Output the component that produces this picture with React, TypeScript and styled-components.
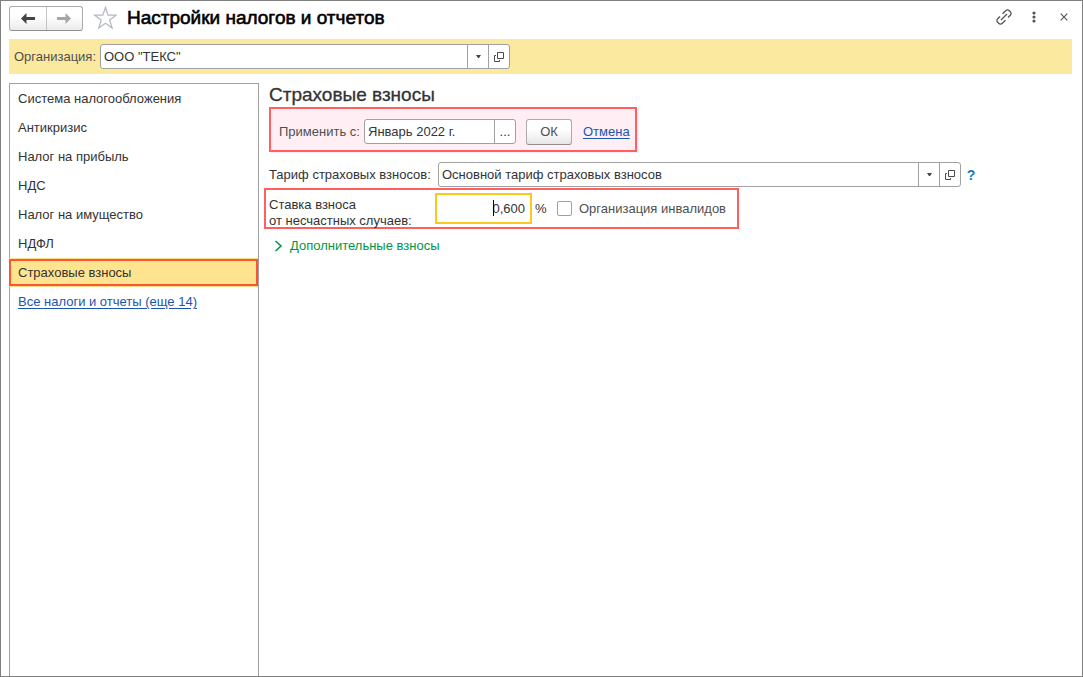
import React, { useState } from 'react';
import styled, { createGlobalStyle, css } from 'styled-components';

const GlobalStyle = createGlobalStyle`
  *, *::before, *::after { box-sizing: border-box; }
  body { margin: 0; background: #fff; }
  body, button, input {
    font-family: "Liberation Sans", Arial, sans-serif;
    font-size: 13px;
    line-height: 16px;
    color: #333;
  }
`;

const Window = styled.div`
  display: flex;
  flex-direction: column;
  min-height: 100vh;
  padding: 4px 10px 0 8px;
  border: 1px solid #808080;
`;

const TitleBar = styled.header`
  display: flex;
  align-items: center;
  height: 26px;
`;

const NavGroup = styled.div`
  display: flex;
  width: 74px;
  height: 25px;
  border: 1px solid #ababab;
  border-bottom-color: #8f8f8f;
  border-radius: 3px;
  background: linear-gradient(#fff 40%, #ebebeb);
`;

const NavButton = styled.button`
  display: flex;
  flex: 1;
  align-items: center;
  justify-content: center;
  padding: 0;
  border: 0;
  background: none;
  & + & { border-left: 1px solid #c4c4c4; }
`;

const IconButton = styled.button`
  display: flex;
  align-items: center;
  justify-content: center;
  width: 24px;
  height: 24px;
  padding: 0;
  border: 0;
  background: none;
`;

const StarButton = styled(IconButton)`
  margin: 0 10px;
`;

const Title = styled.h1`
  flex: 1;
  margin: 0;
  font-size: 19px;
  line-height: 24px;
  font-weight: 400;
  color: #000;
  -webkit-text-stroke: 0.6px #000;
`;

const WindowTools = styled.div`
  display: flex;
  align-self: flex-start;
  gap: 6px;
  margin-right: -4px;
`;

const OrgBar = styled.div`
  display: flex;
  align-items: center;
  height: 35px;
  margin-top: 8px;
  padding: 0 5px;
  background: #fce9a0;
`;

const Label = styled.label<{ $muted?: boolean }>`
  color: ${p => (p.$muted ? '#4f4f4f' : '#333')};
  white-space: nowrap;
`;

const OrgLabel = styled(Label)`
  width: 86px;
`;

const Field = styled.div<{ $width: number }>`
  display: flex;
  flex: 0 1 ${p => p.$width}px;
  height: 25px;
  border: 1px solid #a0a0a0;
  border-radius: 3px;
  background: #fff;
  overflow: hidden;
`;

const FieldInput = styled.input`
  flex: 1;
  min-width: 0;
  padding: 0 3px;
  border: 0;
  outline: 0;
  background: none;
`;

const FieldButton = styled.button`
  display: flex;
  align-items: center;
  justify-content: center;
  width: 21px;
  padding: 0;
  border: 0;
  border-left: 1px solid #a0a0a0;
  background: none;
`;

const Body = styled.div`
  display: flex;
  flex: 1;
  margin-top: 9px;
`;

const Sidebar = styled.nav`
  display: flex;
  flex-direction: column;
  flex: 0 0 250px;
  border: 1px solid #a0a0a0;
  border-bottom: 0;
`;

const selectedItem = css`
  border: 2px solid #ff5430;
  background: #ffe48f;
  box-shadow: 0 -1px #fce08a, 0 1px #fce08a;
`;

const SidebarItem = styled.button<{ $selected?: boolean }>`
  height: 27px;
  margin: 1px 0 1px -1px;
  padding: 0 7px;
  border: 2px solid transparent;
  background: none;
  text-align: left;
  ${p => p.$selected && selectedItem}
`;

const Link = styled.a`
  color: #1a56ae;
  text-decoration: underline;
  text-underline-offset: 2px;
`;

const SidebarLink = styled(Link)`
  padding: 7px 8px;
  line-height: 15px;
`;

const Content = styled.main`
  flex: 1;
  min-width: 0;
  padding-left: 5px;
`;

const Heading = styled.h2`
  margin: 0 5px;
  font-size: 19px;
  line-height: 24px;
  font-weight: 400;
  color: #333;
  -webkit-text-stroke: 0.3px #333;
`;

const ApplyPanel = styled.form`
  display: flex;
  align-items: center;
  width: 368px;
  height: 45px;
  margin-left: 5px;
  padding: 4px 0 0 8px;
  border: 2px solid #ff5f5f;
  background: #ffeff4;
  box-shadow: 2px 1px #ffeff4;
`;

const ApplyLabel = styled(Label)`
  width: 85px;
`;

const OkButton = styled.button`
  width: 46px;
  height: 26px;
  margin: 0 11px 0 10px;
  padding: 0;
  border: 1px solid #ababab;
  border-bottom-color: #8f8f8f;
  border-radius: 3px;
  background: linear-gradient(#fff 40%, #e6e6e6);
  color: #4f4f4f;
`;

const TariffRow = styled.div`
  display: flex;
  align-items: center;
  margin: 10px 0 0 5px;
`;

const TariffLabel = styled(Label)`
  width: 169px;
`;

const HelpButton = styled.button`
  width: 20px;
  padding: 0;
  border: 0;
  background: none;
  color: #0f7ac4;
  font-size: 14px;
  font-weight: 700;
`;

const RatePanel = styled.div`
  display: flex;
  align-items: center;
  width: 475px;
  height: 41px;
  margin-top: 1px;
  padding-left: 3px;
  border: 2px solid #ff5f5f;
`;

const RateLabel = styled(Label)`
  width: 166px;
  padding-top: 8px;
`;

const RateField = styled.div`
  position: relative;
  width: 97px;
  height: 31px;
`;

const RateInput = styled.input`
  width: 100%;
  height: 100%;
  padding: 0 5px;
  border: 2px solid #f9c920;
  outline: 0;
  text-align: right;
  caret-color: transparent;
`;

const Caret = styled.span`
  position: absolute;
  top: 7px;
  right: 38px;
  width: 1px;
  height: 16px;
  background: #000;
`;

const Percent = styled.span`
  width: 25px;
  padding-left: 3px;
`;

const CheckLabel = styled(Label)`
  display: flex;
  align-items: center;
  gap: 7px;
`;

const Checkbox = styled.input`
  appearance: none;
  width: 15px;
  height: 15px;
  margin: 0;
  border: 1px solid #a0a0a0;
  border-radius: 2px;
  background: #fff;
  &:checked { background: #f9c920; }
`;

const Expander = styled.button`
  display: flex;
  align-items: center;
  gap: 7px;
  margin: 9px 0 0 10px;
  padding: 0;
  border: 0;
  background: none;
  color: #009646;
`;

const Arrow = ({ forward }: { forward?: boolean }) => (
  <svg width="14" height="11" viewBox="0 0 14 11" fill={forward ? '#a6a6a6' : '#444'} aria-hidden="true">
    <path d={forward ? 'M14 5.5 8.500 0v4H0v3h8.500v4z' : 'M0 5.5 5.500 0v4H14v3H5.500v4z'} />
  </svg>
);

const DropIcon = () => (
  <svg width="5" height="3" viewBox="0 0 5 3" aria-hidden="true">
    <path d="M0 0h5L3 3H2z" fill="#444" />
  </svg>
);

const OpenIcon = () => (
  <svg width="10" height="10" viewBox="0 0 10 10" fill="none" stroke="#4a4a4a" aria-hidden="true">
    <path d="M3.5.5h6v6h-6zM2 3.5H.5v6h5V8" />
  </svg>
);

const LookupButtons = () => (
  <>
    <FieldButton type="button" aria-label="Выбрать из списка"><DropIcon /></FieldButton>
    <FieldButton type="button" aria-label="Открыть"><OpenIcon /></FieldButton>
  </>
);

const sections = [
  'Система налогообложения',
  'Антикризис',
  'Налог на прибыль',
  'НДС',
  'Налог на имущество',
  'НДФЛ',
  'Страховые взносы',
];

export default function App() {
  const [selected, setSelected] = useState('Страховые взносы');

  return (
    <>
      <GlobalStyle />
      <Window>
        <TitleBar>
          <NavGroup>
            <NavButton aria-label="Назад"><Arrow /></NavButton>
            <NavButton aria-label="Вперед"><Arrow forward /></NavButton>
          </NavGroup>
          <StarButton aria-label="В избранное">
            <svg width="24" height="24" viewBox="0 0 24 24" fill="none" stroke="#b4bac2" strokeWidth="1.3" aria-hidden="true">
              <path d="M12.5 1.5l2.600 7.700h8l-6.400 4.900 2.400 7.900-6.600-4.700L5.800 22l2.400-7.900-6.400-4.900h8z" />
            </svg>
          </StarButton>
          <Title>Настройки налогов и отчетов</Title>
          <WindowTools>
            <IconButton aria-label="Получить ссылку">
              <svg width="16" height="16" viewBox="0 0 16 16" fill="none" stroke="#555" strokeWidth="1.3" aria-hidden="true">
                <path d="M5 11l6-6M6.500 4.800l3.200-3.100a2.500 2.500 0 0 1 3.600 0l1 1a2.500 2.500 0 0 1 0 3.600L12 8.500M9.500 11.200l-3.200 3.100a2.500 2.500 0 0 1-3.600 0l-1-1a2.500 2.500 0 0 1 0-3.600L4 7.500" />
              </svg>
            </IconButton>
            <IconButton aria-label="Дополнительно">
              <svg width="4" height="12" viewBox="0 0 4 12" fill="#555" aria-hidden="true">
                <circle cx="2" cy="2" r="1.6" /><circle cx="2" cy="6" r="1.6" /><circle cx="2" cy="10" r="1.6" />
              </svg>
            </IconButton>
            <IconButton aria-label="Закрыть">
              <svg width="8" height="8" viewBox="0 0 8 8" stroke="#555" strokeWidth="1.2" aria-hidden="true">
                <path d="M.7.7l6.600 6.600M7.300.7L.7 7.300" />
              </svg>
            </IconButton>
          </WindowTools>
        </TitleBar>

        <OrgBar>
          <OrgLabel htmlFor="org" $muted>Организация:</OrgLabel>
          <Field $width={410}>
            <FieldInput id="org" defaultValue={'ООО "ТЕКС"'} />
            <LookupButtons />
          </Field>
        </OrgBar>

        <Body>
          <Sidebar>
            {sections.map(name => (
              <SidebarItem key={name} $selected={name === selected} onClick={() => setSelected(name)}>
                {name}
              </SidebarItem>
            ))}
            <SidebarLink href="#all">Все налоги и отчеты (еще 14)</SidebarLink>
          </Sidebar>

          <Content>
            <Heading>Страховые взносы</Heading>
            <ApplyPanel onSubmit={e => e.preventDefault()}>
              <ApplyLabel htmlFor="from" $muted>Применить с:</ApplyLabel>
              <Field $width={152}>
                <FieldInput id="from" defaultValue="Январь 2022 г." />
                <FieldButton type="button" aria-label="Выбрать период">...</FieldButton>
              </Field>
              <OkButton>ОК</OkButton>
              <Link href="#cancel">Отмена</Link>
            </ApplyPanel>

            <TariffRow>
              <TariffLabel htmlFor="tariff">Тариф страховых взносов:</TariffLabel>
              <Field $width={523}>
                <FieldInput id="tariff" defaultValue="Основной тариф страховых взносов" />
                <LookupButtons />
              </Field>
              <HelpButton>?</HelpButton>
            </TariffRow>

            <RatePanel>
              <RateLabel htmlFor="rate">Ставка взноса<br />от несчастных случаев:</RateLabel>
              <RateField>
                <RateInput id="rate" defaultValue="0,600" />
                <Caret />
              </RateField>
              <Percent>%</Percent>
              <CheckLabel $muted>
                <Checkbox type="checkbox" />
                Организация инвалидов
              </CheckLabel>
            </RatePanel>

            <Expander>
              <svg width="9" height="12" viewBox="0 0 9 12" fill="none" stroke="#009646" strokeWidth="1.6" aria-hidden="true">
                <path d="M1.500 1l5.500 5-5.500 5" />
              </svg>
              Дополнительные взносы
            </Expander>
          </Content>
        </Body>
      </Window>
    </>
  );
}
